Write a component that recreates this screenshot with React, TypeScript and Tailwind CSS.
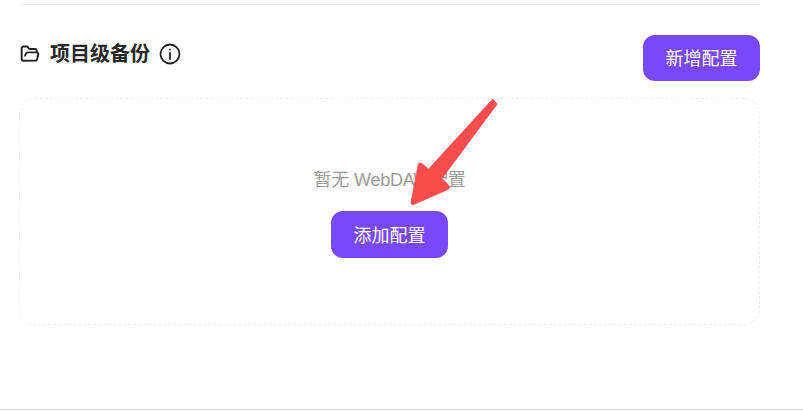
import React from "react";

export default function App() {
  return (
    <div className="relative h-[411px] w-[803px] overflow-hidden bg-white font-['Liberation_Sans','Noto_Sans_CJK_SC',sans-serif]">
      <div className="flex h-[409px] flex-col pl-[19px] pr-[43px] pt-[4px]">
        <div className="h-px bg-[#eeeeee]" />
        <div className="mt-[30px] flex h-[46px] items-start justify-between">
          <div className="mt-[5px] flex items-center">
            <svg width="20" height="20" viewBox="0 0 24 24" fill="none" stroke="#222222" strokeWidth="2.3" strokeLinecap="round" strokeLinejoin="round" className="ml-[1px]">
              <path d="m6 14 1.5-2.9A2 2 0 0 1 9.24 10H20a2 2 0 0 1 1.94 2.5l-1.54 6a2 2 0 0 1-1.95 1.5H4a2 2 0 0 1-2-2V5a2 2 0 0 1 2-2h3.9a2 2 0 0 1 1.69.9l.81 1.2a2 2 0 0 0 1.67.9H18a2 2 0 0 1 2 2v2" />
            </svg>
            <span className="ml-[10px] text-[20px] font-bold leading-[28px] text-[#262626]">项目级备份</span>
            <svg width="24" height="24" viewBox="0 0 24 24" fill="none" stroke="#222222" strokeWidth="1.8" strokeLinecap="round" strokeLinejoin="round" className="ml-[8px]">
              <circle cx="12" cy="12" r="9.5" />
              <path d="M12 17v-6" />
              <path d="M12 7.5h.01" />
            </svg>
          </div>
          <button className="flex h-[46px] w-[117px] items-center justify-center rounded-[12px] bg-[#7848fb] pt-[3px] text-[18px] text-white">新增配置</button>
        </div>
        <div className="mt-[17px] flex h-[227px] flex-col items-center rounded-[16px] border border-dashed border-[#eeeeee] pt-[68px]">
          <p className="text-[18px] leading-[26px] tracking-[-0.2px] text-[#9c9c9c]">暂无 WebDAV 配置</p>
          <button className="mt-[18px] flex h-[47px] w-[117px] items-center justify-center rounded-[12px] bg-[#7848fb] pt-[3px] text-[18px] text-white">添加配置</button>
        </div>
      </div>
      <div className="h-px bg-[#d0d0d0]" />
      <svg className="absolute left-0 top-0" width="803" height="411" viewBox="0 0 803 411" fill="none">
        <path d="M492.7 99 L497.3 104 L442 178.5 L448.5 185 Q451 188 448 189.5 L414 204.5 Q410.5 205.5 411 202 L418 165 Q419 161.5 422 163.5 L428.5 169 Z" fill="#f94d4d" stroke="#f94d4d" strokeWidth="0.6" strokeLinejoin="round" />
      </svg>
    </div>
  );
}
